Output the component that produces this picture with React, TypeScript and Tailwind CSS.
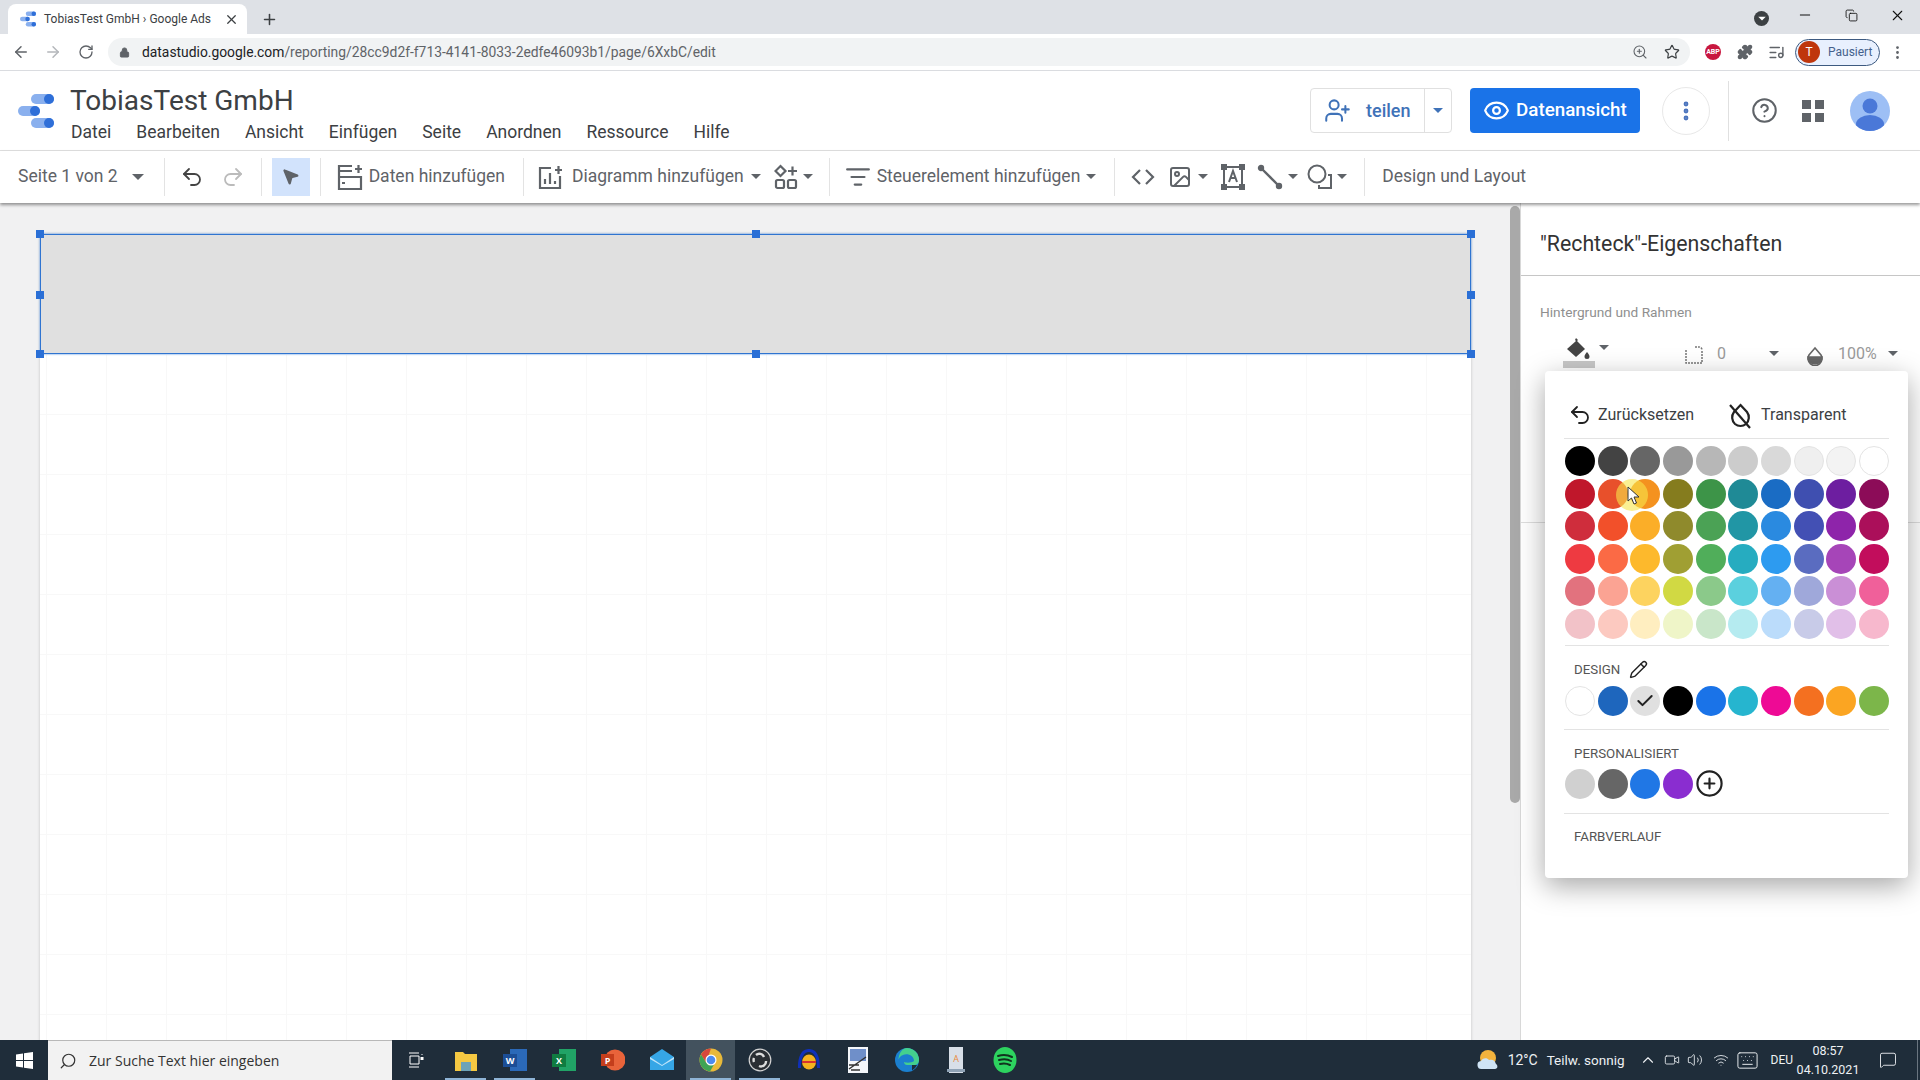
import { ArrowLeft, ArrowRight, RotateCw, Lock, Plus, X, ZoomIn, Star, Puzzle, ListMusic, EllipsisVertical, Minus, Copy, CircleHelp, Undo2, Redo2, MousePointer2, Eye, UserPlus, Search, ChevronUp, Video, Volume2, Wifi, Keyboard, MessageSquare, Pencil, Check, Image, ListFilter, CirclePlus } from "lucide-react";
import type { ReactNode } from "react";

const palette = [
  ["#000000", "#434343", "#666666", "#999999", "#b7b7b7", "#cccccc", "#d9d9d9", "#efefef", "#f3f3f3", "#ffffff"],
  ["#c0172b", "#e8502b", "#f4921f", "#857c1e", "#3d9448", "#1f8a96", "#1a6cc4", "#3f4fb0", "#6d1ea0", "#8c0c58"],
  ["#cf2d3c", "#f2502a", "#fbae28", "#8f8a2c", "#4ba255", "#2196a5", "#2a8ae0", "#4350b4", "#8e24aa", "#ab0f5a"],
  ["#ee3a41", "#fb6a45", "#fdb92c", "#a09f33", "#50ae5a", "#26acc0", "#2d9bf0", "#5a6cc0", "#a645b8", "#c20d5c"],
  ["#e2727e", "#fba393", "#fdd35f", "#d1d943", "#8bc98a", "#5bd0de", "#64b0f2", "#9fa8da", "#ca8fd6", "#f0609a"],
  ["#f2c2c8", "#fcc9c0", "#ffeec0", "#eff5c8", "#c9e6c9", "#b5ebf0", "#bbdcfb", "#c8cbe8", "#e1bfe8", "#f7b8cd"],
];
const designColors = ["#ffffff", "#1e66bd", "#e0e0e0", "#000000", "#1a73e8", "#26b5cf", "#ee0a95", "#f47020", "#fba522", "#7cb64a"];
const customColors = ["#d0d0d0", "#666666", "#2077e5", "#8a2dd0"];
const menu = ["Datei", "Bearbeiten", "Ansicht", "Einfügen", "Seite", "Anordnen", "Ressource", "Hilfe"];

function Swatch({ color, children }: { color: string; children?: ReactNode }) {
  const light = color === "#ffffff" || color === "#f3f3f3" || color === "#efefef";
  return (
    <div
      className={`w-[30px] h-[30px] rounded-full flex items-center justify-center ${light ? "border border-[#e4e4e4]" : ""}`}
      style={{ backgroundColor: color }}
    >
      {children}
    </div>
  );
}

function Caret({ className = "" }: { className?: string }) {
  return <div className={`w-0 h-0 border-x-[5px] border-x-transparent border-t-[5px] border-t-[#5f6368] ${className}`} />;
}

function Sep({ className = "" }: { className?: string }) {
  return <div className={`w-px h-[38px] bg-[#e3e3e3] shrink-0 ${className}`} />;
}

function Logo({ size = 36 }: { size?: number }) {
  return (
    <svg width={size} height={size} viewBox="0 0 36 36">
      <rect x="13" y="1" width="23" height="10" rx="5" fill="#8ab0ee" />
      <circle cx="31" cy="6" r="5" fill="#2f6fd8" />
      <rect x="0" y="13" width="22" height="10" rx="5" fill="#8ab0ee" />
      <circle cx="17" cy="18" r="5" fill="#2f6fd8" />
      <rect x="13" y="25" width="23" height="10" rx="5" fill="#8ab0ee" />
      <circle cx="31" cy="30" r="5" fill="#2f6fd8" />
    </svg>
  );
}

function TaskIcon({ children, active, bar }: { children: ReactNode; active?: boolean; bar?: boolean }) {
  return (
    <div className={`relative w-[49px] h-10 flex items-center justify-center shrink-0 ${active ? "bg-[#43525e]" : ""}`}>
      {children}
      {bar && <div className="absolute bottom-0 left-[4px] right-[4px] h-[2px] bg-[#8fb4d6]" />}
    </div>
  );
}

export default function App() {
  return (
    <div className="w-[1920px] h-[1080px] overflow-hidden flex flex-col relative bg-white font-['Roboto',sans-serif]">
      {/* browser tabs */}
      <div className="h-[34px] bg-[#dee1e6] flex items-end pl-2 shrink-0">
        <div className="w-[239px] h-[30px] bg-white rounded-t-lg flex items-center pl-3 pr-2">
          <Logo size={16} />
          <span className="ml-2 text-[12px] text-[#3c4043] whitespace-nowrap">TobiasTest GmbH › Google Ads</span>
          <X size={15} className="ml-auto text-[#3c4043]" />
        </div>
        <Plus size={17} strokeWidth={2.2} className="ml-[14px] mb-[6px] text-[#3c4043]" />
        <div className="ml-auto flex items-center h-full">
          <div className="w-[15px] h-[15px] rounded-full bg-[#3c4043] flex items-center justify-center mr-[28px] mt-0.5">
            <Caret className="!border-t-white scale-75" />
          </div>
          <Minus size={16} strokeWidth={1.5} className="text-[#111] mb-[4px]" />
          <Copy size={13} strokeWidth={1.6} className="text-[#111] ml-[32px] mb-[4px]" />
          <X size={17} strokeWidth={1.5} className="text-[#111] ml-[31px] mr-[14px] mb-[4px]" />
        </div>
      </div>

      {/* address bar */}
      <div className="h-[37px] bg-white border-b border-[#dadce0] flex items-center shrink-0">
        <ArrowLeft size={18} className="ml-3 text-[#5f6368]" />
        <ArrowRight size={18} className="ml-[14px] text-[#b4b7bb]" />
        <RotateCw size={16} className="ml-[16px] text-[#5f6368]" />
        <div className="ml-[14px] w-[1582px] h-[28px] bg-[#f1f3f4] rounded-full flex items-center pl-[11px] pr-[10px] shrink-0">
          <Lock size={11} fill="#5f6368" className="text-[#5f6368]" />
          <span className="ml-[12px] text-[13.850px] whitespace-nowrap text-[#5f6368]">
            <span className="text-[#202124]">datastudio.google.com</span>/reporting/28cc9d2f-f713-4141-8033-2edfe46093b1/page/6XxbC/edit
          </span>
          <ZoomIn size={16} strokeWidth={1.6} className="ml-auto text-[#5f6368]" />
          <Star size={16} strokeWidth={1.8} className="ml-[16px] text-[#3c4043]" />
        </div>
        <div className="ml-[15px] w-4 h-4 rounded-full bg-[#c8173f] text-white text-[7px] font-bold flex items-center justify-center shrink-0">ABP</div>
        <Puzzle size={16} fill="#5f6368" className="ml-[16px] text-[#5f6368] shrink-0" />
        <ListMusic size={17} className="ml-[15px] text-[#5f6368] shrink-0" />
        <div className="ml-[10px] w-[85px] h-[27px] rounded-full border border-[#3d5a80] bg-[#e8f0fe] flex items-center shrink-0">
          <div className="w-[22px] h-[22px] ml-[2px] rounded-full bg-[#bf360c] text-white text-[12px] flex items-center justify-center">T</div>
          <span className="ml-2 text-[12px] text-[#44618c]">Pausiert</span>
        </div>
        <EllipsisVertical size={17} className="ml-[9px] text-[#5f6368] shrink-0" />
      </div>

      {/* report header */}
      <div className="h-[80px] border-b border-[#e0e0e0] flex items-center shrink-0">
        <div className="ml-[18px] shrink-0"><Logo /></div>
        <div className="ml-[16px] self-start pt-[14px] flex flex-col">
          <div className="text-[28px] leading-[32px] text-[#3c4043]">TobiasTest GmbH</div>
          <div className="flex gap-[25px] text-[17.500px] leading-[24px] text-[#3c4043] mt-[3px] ml-px">
            {menu.map((m) => <span key={m}>{m}</span>)}
          </div>
        </div>
        <div className="ml-auto flex items-center">
          <div className="flex w-[142px] h-[45px] rounded border border-[#e0e0e0] text-[#3f72b8]">
            <div className="flex-1 flex items-center pl-[13px] gap-[15px] border-r border-[#e0e0e0]">
              <UserPlus size={27} strokeWidth={1.8} />
              <span className="text-[18px] font-medium">teilen</span>
            </div>
            <div className="w-[26px] flex items-center justify-center"><Caret className="!border-t-[#3f72b8]" /></div>
          </div>
          <div className="ml-[18px] w-[170px] h-[45px] bg-[#1a73e8] rounded flex items-center pl-[13px] gap-[6px] text-white">
            <Eye size={27} strokeWidth={2} />
            <span className="text-[18.800px] font-medium">Datenansicht</span>
          </div>
          <div className="ml-[22px] w-[48px] h-[48px] rounded-full border border-[#e8e8e8] flex items-center justify-center">
            <EllipsisVertical size={24} strokeWidth={2.8} className="text-[#4a73bd]" />
          </div>
          <div className="ml-[18px] w-px h-[60px] bg-[#e0e0e0]" />
          <CircleHelp size={27} strokeWidth={1.8} className="ml-[22px] text-[#5f6368]" />
          <div className="ml-[24px] grid grid-cols-2 gap-[4px]">
            <div className="w-[9px] h-[9px] bg-[#5f6368]" />
            <div className="w-[9px] h-[9px] bg-[#5f6368]" />
            <div className="w-[9px] h-[9px] bg-[#5f6368]" />
            <div className="w-[9px] h-[9px] bg-[#5f6368]" />
          </div>
          <div className="ml-[26px] mr-[30px] w-[40px] h-[40px] rounded-full bg-[#9dbff5] overflow-hidden">
            <svg viewBox="0 0 40 40" width="40" height="40">
              <circle cx="20" cy="15" r="7.5" fill="#4a78d8" />
              <ellipse cx="20" cy="33" rx="14" ry="9" fill="#4a78d8" />
            </svg>
          </div>
        </div>
      </div>

      {/* toolbar */}
      <div className="h-[52px] pb-[1px] flex items-center shrink-0 bg-white shadow-[0_2px_3px_rgba(0,0,0,0.4)] z-10 text-[17.500px] text-[#5f6368] whitespace-nowrap">
        <span className="ml-[18px]">Seite 1 von 2</span>
        <Caret className="ml-[14px] border-x-[6px] border-t-[6px]" />
        <Sep className="ml-[20px]" />
        <Undo2 size={24} strokeWidth={1.8} className="ml-[15px] text-[#444]" />
        <Redo2 size={24} strokeWidth={1.8} className="ml-[17px] text-[#bbb]" />
        <Sep className="ml-[16px]" />
        <div className="ml-[10px] w-[38px] h-[38px] bg-[#d2e3fc] flex items-center justify-center">
          <MousePointer2 size={19} fill="#5f6368" className="text-[#5f6368]" />
        </div>
        <Sep className="ml-[10px]" />
        <svg className="ml-[16px] shrink-0" width="26" height="28" viewBox="0 0 26 28" fill="none" stroke="#5f6368" strokeWidth="2.2">
          <path d="M15 3H2v23h22V14H2M2 8h13M2 14M18 6h7M21.5 2v8M5 20h3" />
        </svg>
        <span className="ml-[6px]">Daten hinzufügen</span>
        <Sep className="ml-[18px]" />
        <svg className="ml-[14px] shrink-0" width="24" height="26" viewBox="0 0 24 26" fill="none" stroke="#5f6368" strokeWidth="2.2">
          <path d="M13 4H2v20h20V12M17 6h7M20.5 2v8M7 20v-5M12 20V9M17 20v-3" />
        </svg>
        <span className="ml-[10px]">Diagramm hinzufügen</span>
        <Caret className="ml-[7px]" />
        <svg className="ml-[13px] shrink-0" width="24" height="26" viewBox="0 0 24 26" fill="none" stroke="#5f6368" strokeWidth="2.2">
          <path d="M6.5 2l5 5-5 5-5-5zM14 7h9M18.5 2.5v9" />
          <rect x="2" y="16" width="8" height="8" rx="1.5" />
          <rect x="14" y="16" width="8" height="8" rx="1.5" />
        </svg>
        <Caret className="ml-[5px]" />
        <Sep className="ml-[16px]" />
        <ListFilter size={26} strokeWidth={2} className="ml-[15px]" />
        <span className="ml-[6px]">Steuerelement hinzufügen</span>
        <Caret className="ml-[6px]" />
        <Sep className="ml-[18px]" />
        <svg className="ml-[15px] shrink-0" width="26" height="26" viewBox="0 0 26 26" fill="none" stroke="#5f6368" strokeWidth="2.2">
          <path d="M10 6l-7 7 7 7M16 6l7 7-7 7" />
        </svg>
        <Image size={24} strokeWidth={2} className="ml-[12px]" />
        <Caret className="ml-[6px]" />
        <svg className="ml-[13px] shrink-0" width="24" height="26" viewBox="0 0 24 26" fill="none" stroke="#5f6368" strokeWidth="2">
          <path d="M3 3h18v20H3zM8 18l4-11 4 11M9.500 14h5" />
          <rect x="1" y="1" width="4" height="4" fill="#5f6368" />
          <rect x="19" y="1" width="4" height="4" fill="#5f6368" />
          <rect x="1" y="21" width="4" height="4" fill="#5f6368" />
          <rect x="19" y="21" width="4" height="4" fill="#5f6368" />
        </svg>
        <svg className="ml-[12px] shrink-0" width="26" height="26" viewBox="0 0 26 26" fill="#5f6368" stroke="#5f6368" strokeWidth="2.4">
          <path d="M4 4l18 18" />
          <circle cx="4" cy="4" r="2" />
          <circle cx="22" cy="22" r="2" />
        </svg>
        <Caret className="ml-[5px]" />
        <svg className="ml-[8px] shrink-0" width="28" height="28" viewBox="0 0 28 28" fill="none" stroke="#5f6368" strokeWidth="2">
          <circle cx="11" cy="11" r="8.500" />
          <path d="M22 12h3v13H13v-3" />
        </svg>
        <Caret className="ml-[3px]" />
        <Sep className="ml-[17px]" />
        <span className="ml-[17px]">Design und Layout</span>
      </div>

      {/* workspace */}
      <div className="flex-1 min-h-0 flex">
        <div className="w-[1510px] bg-[#f1f1f2] pl-[40px] pt-[31px]">
          <div className="relative w-[1431px] h-[900px] bg-white shadow-[0_0_3px_rgba(0,0,0,0.2)] bg-[linear-gradient(to_right,#f8f8f8_1px,transparent_1px),linear-gradient(to_bottom,#f8f8f8_1px,transparent_1px)] bg-[size:60px_60px] bg-[position:6px_0]">
            <div className="h-[120px] bg-[#e0e0e0] border border-[#2f74d0] shadow-[0_0_2px_#5b9bf0]" />
            <div className="absolute left-[-4px] top-[-4px] w-2 h-2 bg-[#2a6fd6]" />
            <div className="absolute left-[712px] top-[-4px] w-2 h-2 bg-[#2a6fd6]" />
            <div className="absolute left-[1427px] top-[-4px] w-2 h-2 bg-[#2a6fd6]" />
            <div className="absolute left-[-4px] top-[57px] w-2 h-2 bg-[#2a6fd6]" />
            <div className="absolute left-[1427px] top-[57px] w-2 h-2 bg-[#2a6fd6]" />
            <div className="absolute left-[-4px] top-[116px] w-2 h-2 bg-[#2a6fd6]" />
            <div className="absolute left-[712px] top-[116px] w-2 h-2 bg-[#2a6fd6]" />
            <div className="absolute left-[1427px] top-[116px] w-2 h-2 bg-[#2a6fd6]" />
          </div>
        </div>
        <div className="w-[10px] bg-[#f1f1f2] pt-[3px]">
          <div className="h-[597px] bg-[#a9a9a9] rounded-t-md rounded-b-md" />
        </div>
        <div className="flex-1 bg-white border-l border-[#d8d8d8]">
          <div className="h-[73px] border-b border-[#c6c6c6] pl-[19px] pt-[27px] text-[21.300px] leading-[28px] text-[#333]">"Rechteck"-Eigenschaften</div>
          <div className="pl-[19px] pt-[27px] text-[13.700px] leading-[18px] text-[#8f8f8f]">Hintergrund und Rahmen</div>
          <div className="flex items-start pl-[45px] pt-[14px] text-[16px] text-[#9a9a9a]">
            <div className="relative w-[24px] h-[32px]">
              <svg className="mt-[2px]" width="26" height="24" viewBox="0 0 26 24" fill="#444">
                <path d="M10 1l2 2-1 1 8 8-9 8-9-8 9-8-1-1zM21 15c1.500 2 2.500 3 2.500 4.500a2.500 2.500 0 0 1-5 0c0-1.500 1-2.500 2.500-4.500z" />
              </svg>
              <div className="absolute left-[-3px] top-[26px] w-[32px] h-[7px] bg-[#c8c8c8]" />
            </div>
            <Caret className="ml-[9px] mt-[10px] border-x-[4px]" />
            <svg className="ml-[76px] mt-[11px]" width="18" height="18" viewBox="0 0 18 18" fill="none" stroke="#777" strokeWidth="1.500" strokeDasharray="2 1">
              <path d="M1 4v13h16V5M10 1h4a3 3 0 0 1 3 3" />
            </svg>
            <span className="ml-[14px] mt-[8px] leading-[22px]">0</span>
            <Caret className="ml-[43px] mt-[16px]" />
            <svg className="ml-[27px] mt-[11px]" width="18" height="20" viewBox="0 0 18 20" fill="none" stroke="#666" strokeWidth="1.600">
              <path d="M9 2L3 9a7 7 0 1 0 12 0z" />
              <path d="M2 11h14a7 7 0 0 1-14 0z" fill="#666" />
            </svg>
            <span className="ml-[14px] mt-[8px] leading-[22px]">100%</span>
            <Caret className="ml-[11px] mt-[16px]" />
          </div>
          <div className="mt-[155px] border-b border-[#dedede]" />
        </div>
      </div>

      {/* taskbar */}
      <div className="h-10 bg-[#1f2d3a] flex items-center shrink-0 text-white z-20 whitespace-nowrap font-['Open_Sans',sans-serif]">
        <div className="w-[48px] flex items-center justify-center shrink-0">
          <svg width="17" height="17" viewBox="0 0 17 17" fill="#fff">
            <path d="M0 2.500l7-1v6.500H0zM8 1.300L17 0v8H8zM0 9h7v6.500l-7-1zM8 9h9v8l-9-1.300z" />
          </svg>
        </div>
        <div className="w-[344px] h-full bg-[#f2f2f2] border-t border-[#b8b8b8] flex items-center pl-[11px] text-[#333] shrink-0">
          <Search size={18} className="-scale-x-100" strokeWidth={1.6} />
          <span className="ml-[12px] text-[14px]">Zur Suche Text hier eingeben</span>
        </div>
        <div className="w-[48px] flex justify-center ml-[0px] shrink-0 text-white">
          <svg width="16" height="16" viewBox="0 0 16 16" fill="none" stroke="#fff" strokeWidth="1">
            <path d="M1 1h10M1 15h10M2 4h9v8H2zM14 2v1M14 6v1" />
            <rect x="13" y="5.500" width="2" height="2" fill="#fff" />
          </svg>
        </div>
        <div className="flex ml-[1px]">
          <TaskIcon bar>
            <svg width="22" height="22" viewBox="0 0 22 22"><path d="M0 3h8l2 2h12v17H0z" fill="#f5c842" /><rect x="6" y="13" width="10" height="9" fill="#6da3b8" /></svg>
          </TaskIcon>
          <TaskIcon bar>
            <svg width="24" height="24" viewBox="0 0 24 24"><rect x="7" y="1" width="17" height="22" fill="#2b69b8" /><rect x="0" y="6" width="14" height="13" fill="#1c4e96" /><text x="7" y="16" fontSize="9" fontWeight="700" fill="#fff" textAnchor="middle">W</text></svg>
          </TaskIcon>
          <TaskIcon>
            <svg width="24" height="24" viewBox="0 0 24 24"><rect x="7" y="1" width="17" height="22" fill="#21a366" /><rect x="0" y="6" width="14" height="13" fill="#107c41" /><text x="7" y="16" fontSize="9" fontWeight="700" fill="#fff" textAnchor="middle">X</text></svg>
          </TaskIcon>
          <TaskIcon>
            <svg width="24" height="24" viewBox="0 0 24 24"><circle cx="14" cy="12" r="10.500" fill="#e8633a" /><rect x="0" y="6" width="13" height="12" fill="#c43e1c" /><text x="6.500" y="16" fontSize="9" fontWeight="700" fill="#fff" textAnchor="middle">P</text></svg>
          </TaskIcon>
          <TaskIcon>
            <svg width="24" height="24" viewBox="0 0 24 24"><path d="M0 9l12-8 12 8v13H0z" fill="#36a6e6" /><path d="M0 9l12 8 12-8v2l-12 7L0 11z" fill="#bfe4fa" /></svg>
          </TaskIcon>
          <TaskIcon active bar>
            <svg width="24" height="24" viewBox="0 0 24 24">
              <circle cx="12" cy="12" r="11.500" fill="#e8b93a" />
              <path d="M12 .5A11.500 11.500 0 0 0 2 6.500l5 8z" fill="#d8483b" />
              <path d="M2 6.500A11.500 11.500 0 0 0 11 23.500l4-7-8-2z" fill="#3fa455" />
              <circle cx="12" cy="12" r="5.500" fill="#fff" />
              <circle cx="12" cy="12" r="4.300" fill="#4c8bf0" />
            </svg>
          </TaskIcon>
          <TaskIcon bar>
            <svg width="24" height="24" viewBox="0 0 24 24" fill="none"><circle cx="12" cy="12" r="10.800" fill="#2a2e33" stroke="#d4d4d4" strokeWidth="1.200" /><path d="M8 7a5 5 0 0 1 8 2M18 13a5 5 0 0 1-7 5M6 14a5 5 0 0 1 0-4" stroke="#ddd" strokeWidth="2.400" /></svg>
          </TaskIcon>
          <TaskIcon>
            <svg width="24" height="24" viewBox="0 0 24 24"><path d="M1 20C1 4 7 1 12 1s11 3 11 19h-3C20 9 17 4 12 4S4 9 4 20z" fill="#1030b8" /><ellipse cx="12" cy="14" rx="7" ry="7.500" fill="#f5b21f" /><rect x="5" y="13" width="14" height="2" fill="#d6322f" /></svg>
          </TaskIcon>
          <TaskIcon>
            <svg width="20" height="26" viewBox="0 0 20 26"><rect width="20" height="26" fill="#f4f6fa" /><rect x="2" y="2" width="16" height="12" fill="#6f8fc9" /><path d="M1 22L18 10M1 18h10M3 23h9" stroke="#333" strokeWidth="1.500" fill="none" /></svg>
          </TaskIcon>
          <TaskIcon>
            <svg width="26" height="26" viewBox="0 0 26 26" fill="none">
              <circle cx="13" cy="13" r="12" fill="#1b7fcf" />
              <path d="M13 1a12 12 0 0 1 12 12c0 3-2 5-5 5h-7c-2 0-3-1.500-3-3 2 1 8 1 10-1 0-5-6-8-11-6-3 1-5 4-5 6C5 6 8 1 13 1z" fill="#44d08e" />
              <path d="M18 18h5a12 12 0 0 1-5 5.500z" fill="#1f2d3a" />
            </svg>
          </TaskIcon>
          <TaskIcon>
            <svg width="18" height="26" viewBox="0 0 18 26"><rect x="2" width="14" height="26" fill="#d8dfe8" /><rect y="22" width="18" height="3" fill="#8fa2b5" /><text x="9" y="15" fontSize="9" fill="#e88a3c" textAnchor="middle">A</text></svg>
          </TaskIcon>
          <TaskIcon>
            <svg width="24" height="26" viewBox="0 0 24 26" fill="none"><ellipse cx="12" cy="13" rx="11.500" ry="13" fill="#2dd35f" /><path d="M5 9c5-1.500 10-1 14 1M6 13c4-1 9-.8 12 1M7 17c3-.8 7-.6 10 1" stroke="#11331e" strokeWidth="2" strokeLinecap="round" /></svg>
          </TaskIcon>
        </div>
        <div className="ml-auto flex items-center h-full text-[#eef1f4] font-['Roboto',sans-serif]">
          <svg width="21" height="20" viewBox="0 0 21 20">
            <circle cx="11" cy="8" r="8" fill="#f3b33d" />
            <path d="M5 19a4 4 0 0 1-1-8c1-3 6-4 8-1 3-1 6 0 7 4 2 1 2 5-1 5z" fill="#cfe4f5" />
          </svg>
          <span className="ml-[10px] text-[14px]">12°C</span>
          <span className="ml-[9px] text-[13.500px]">Teilw. sonnig</span>
          <ChevronUp size={18} strokeWidth={1.5} className="ml-[14px]" />
          <Video size={16} strokeWidth={1.3} className="ml-[7px]" />
          <Volume2 size={16} strokeWidth={1.3} className="ml-[7px]" />
          <Wifi size={16} strokeWidth={1.3} className="ml-[10px]" />
          <Keyboard size={23} strokeWidth={1} className="ml-[7px]" />
          <span className="ml-[12px] text-[12px]">DEU</span>
          <div className="ml-[6px] w-[58px] flex flex-col items-center text-[12.500px] leading-[19px]">
            <span>08:57</span>
            <span>04.10.2021</span>
          </div>
          <MessageSquare size={18} strokeWidth={1.2} className="ml-[22px]" />
          <div className="ml-[20px] w-px h-full bg-[#6a7580]" />
          <div className="w-[2px] h-full" />
        </div>
      </div>

      {/* colour picker popover */}
      <div className="absolute left-[1545px] top-[371px] w-[363px] h-[507px] bg-white rounded shadow-[0_8px_28px_rgba(0,0,0,0.35)] z-30 px-[19px]">
        <div className="h-[68px] pt-[21px] flex items-center text-[16px] text-[#3c4043] border-b border-[#e3e3e3]">
          <Undo2 size={24} strokeWidth={1.8} className="ml-[4px] text-[#222]" />
          <span className="ml-[6px]">Zurücksetzen</span>
          <svg className="ml-[34px] shrink-0" width="25" height="27" viewBox="0 0 25 27" fill="none" stroke="#222" strokeWidth="2.200">
            <path d="M12.500 3l6.500 7a9 9 0 0 1-1 12 8.500 8.500 0 0 1-11 0 9 9 0 0 1-1-12z" />
            <path d="M2 3l20 23" />
          </svg>
          <span className="ml-[8px]">Transparent</span>
        </div>
        <div className="grid grid-cols-10 gap-[2.500px] ml-px pt-[7px] pb-[6px] border-b border-[#e3e3e3]">
          {palette.flat().map((c, i) => <Swatch key={i} color={c} />)}
        </div>
        <div className="h-[84px] border-b border-[#e3e3e3] pt-[12px]">
          <div className="flex items-center h-[24px] pl-[10px] text-[13.300px] text-[#555]">
            DESIGN
            <Pencil size={19} strokeWidth={1.8} className="ml-[9px] text-[#222]" />
          </div>
          <div className="grid grid-cols-10 gap-[2.500px] ml-px mt-[4px]">
            {designColors.map((c, i) => (
              <Swatch key={i} color={c}>{i === 2 && <Check size={20} strokeWidth={2.4} className="text-[#222]" />}</Swatch>
            ))}
          </div>
        </div>
        <div className="h-[84px] border-b border-[#e3e3e3] pt-[12px]">
          <div className="flex items-center h-[24px] pl-[10px] text-[13.300px] text-[#555]">PERSONALISIERT</div>
          <div className="flex gap-[2.500px] ml-px mt-[3px] items-center">
            {customColors.map((c) => <Swatch key={c} color={c} />)}
            <CirclePlus size={29} strokeWidth={1.8} className="text-[#222]" />
          </div>
        </div>
        <div className="flex items-center h-[46px] pl-[10px] text-[13.300px] text-[#555]">FARBVERLAUF</div>
      </div>

      {/* cursor with highlight */}
      <div className="absolute left-[1616px] top-[479px] w-8 h-8 rounded-full bg-[#f7e64b] opacity-60 z-40" />
      <svg className="absolute left-[1627px] top-[486px] z-50" width="13" height="19" viewBox="0 0 13 19">
        <path d="M1 1v14l3.500-3 2.500 6 2.500-1-2.500-6h5z" fill="#fff" stroke="#333" strokeWidth="1" />
      </svg>
    </div>
  );
}
